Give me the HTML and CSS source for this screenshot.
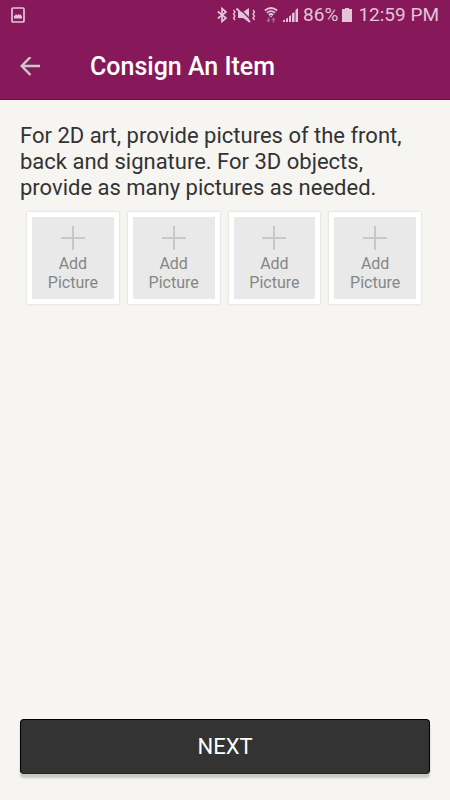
FILE: index.html
```html
<!DOCTYPE html>
<html lang="en">
<head>
  <meta charset="UTF-8" />
  <meta name="viewport" content="width=device-width, initial-scale=1.0" />
  <title>Consign An Item</title>
  <link rel="stylesheet" href="styles.css">
</head>
<body>
  <header class="header">
    <div class="status-bar">
      <svg class="picture-icon" width="14" height="16" viewBox="0 0 14 16">
        <rect x="1" y="1" width="12" height="14" rx="1" fill="none" stroke="currentColor" stroke-width="1.7" />
        <path d="M3 11.500V9l1-.5L5 7l1.500 1.500L7.500 7 9 8l1-.5.500 1.500.5.5v2z" fill="currentColor" />
      </svg>
      <div class="status-right">
        <svg width="10" height="16" viewBox="0 0 10 16" fill="none" stroke="currentColor" stroke-width="1.700">
          <path d="M.8 4.500l8.200 6.500L5 14.500v-13L9 5 .8 11.500" />
        </svg>
        <svg class="mute-icon" width="24" height="16" viewBox="0 0 24 16">
          <path d="M6 5h5l6-4v14l-6-4H6z" fill="currentColor" />
          <path d="M6.500 .5l12 12" stroke="#87195b" stroke-width="1.300" />
          <path d="M4.500 1.500L18 15" stroke="currentColor" stroke-width="2" />
          <path d="M1.500 3L3 5 1.500 7 3 9l-1.500 2L3 13M21 3l1.500 2L21 7l1.500 2-1.500 2 1.500 2" fill="none" stroke="currentColor" stroke-width="1.300" />
        </svg>
        <svg class="wifi-icon" width="14" height="16" viewBox="0 0 14 16">
          <g fill="none" stroke="currentColor" stroke-width="1.700">
            <path d="M.8 3.500Q7-1.500 13.200 3.500M2.800 5.800Q7 2.500 11.200 5.800M4.800 8Q7 6 9.200 8" />
          </g>
          <path d="M5.500 8.800h3L7 10.600z" fill="currentColor" />
          <path d="M4.500 10.500l2.200 2.500H5.300v2.500H3.700V13H2.300zM9.500 15.500L7.300 13h1.400v-2.500h1.600V13h1.400z" fill="currentColor" opacity=".45" transform="matrix(1 0 0 -1 0 26)" />
        </svg>
        <svg class="signal-icon" width="16" height="16" viewBox="0 0 16 16" fill="currentColor">
          <path d="M0 15v-1.500l2-1V15zM3 15v-3l2-1.500V15zM6 15V9.500L8 8v7zM9 15V6.500L11.500 5v10zM12.500 15V3L15 1v14z" />
        </svg>
        <span class="battery-level">86%</span>
        <svg class="battery-icon" width="10" height="16" viewBox="0 0 10 16" fill="currentColor">
          <path d="M3 1h4v1h3v13H0V2h3z" />
        </svg>
        <span>12:59 PM</span>
      </div>
    </div>
    <div class="title-bar">
      <button class="back" aria-label="Back">
        <svg width="20" height="20" viewBox="0 0 20 20" fill="none" stroke="currentColor" stroke-width="2.400">
          <path d="M20 9H2M10.500 0L1.700 9l8.800 9" />
        </svg>
      </button>
      <h1>Consign An Item</h1>
    </div>
  </header>

  <main class="content">
    <p class="intro">For 2D art, provide pictures of the front, back and signature. For 3D objects, provide as many pictures as needed.</p>
    <div class="pictures">
      <button class="add-picture">
        <svg width="24" height="24" viewBox="0 0 24 24"><path d="M12 0v24M0 12h24" stroke="#c8c8c8" stroke-width="2" /></svg>
        <span>Add<br>Picture</span>
      </button>
      <button class="add-picture">
        <svg width="24" height="24" viewBox="0 0 24 24"><path d="M12 0v24M0 12h24" stroke="#c8c8c8" stroke-width="2" /></svg>
        <span>Add<br>Picture</span>
      </button>
      <button class="add-picture">
        <svg width="24" height="24" viewBox="0 0 24 24"><path d="M12 0v24M0 12h24" stroke="#c8c8c8" stroke-width="2" /></svg>
        <span>Add<br>Picture</span>
      </button>
      <button class="add-picture">
        <svg width="24" height="24" viewBox="0 0 24 24"><path d="M12 0v24M0 12h24" stroke="#c8c8c8" stroke-width="2" /></svg>
        <span>Add<br>Picture</span>
      </button>
    </div>
  </main>

  <footer class="footer">
    <button class="next">NEXT</button>
  </footer>
</body>
</html>
```

FILE: styles.css
```css
* {
  box-sizing: border-box;
}

body {
  margin: 0;
  min-height: 100vh;
  display: flex;
  flex-direction: column;
  background-color: #f6f5f1;
  color: #333;
  font-family: Roboto, sans-serif;
}

button {
  font-family: inherit;
  cursor: pointer;
}

svg {
  display: block;
  flex-shrink: 0;
}

.header {
  background-color: #87195b;
  border-bottom: 1px solid #6d0c47;
}

.status-bar {
  display: flex;
  align-items: center;
  justify-content: space-between;
  height: 29px;
  padding: 0 11px;
  color: #e2c5d6;
  font-size: 19px;
}

.status-right {
  display: flex;
  align-items: center;
}

.mute-icon {
  margin-left: 5px;
}

.wifi-icon {
  margin-left: 8px;
}

.signal-icon {
  margin-left: 5px;
}

.battery-level {
  margin-left: 4px;
}

.battery-icon {
  margin: 0 6px 0 4px;
}

.title-bar {
  display: flex;
  align-items: center;
  height: 70px;
  padding: 5px 20px 0;
}

.back {
  padding: 0;
  border: none;
  background: none;
  color: #c9c9c9;
}

.title-bar h1 {
  margin: 0 0 0 50px;
  color: #fff;
  font-size: 25px;
  font-weight: 500;
}

.content {
  flex: 1;
  padding: 23px 20px;
}

.intro {
  margin: 0 0 11px;
  font-size: 22px;
  line-height: 26px;
}

.pictures {
  display: grid;
  grid-template-columns: repeat(4, 1fr);
  gap: 9px;
  padding: 0 9px 0 7px;
}

.add-picture {
  display: flex;
  flex-direction: column;
  align-items: center;
  gap: 4px;
  height: 92px;
  padding: 9px 0 0;
  border: 5px solid #fff;
  background-color: #e9e9e9;
  box-shadow: 0 0 2px #ccc;
  color: #868686;
  font-size: 16px;
  line-height: 19px;
}

.footer {
  padding: 0 20px 26px;
}

.next {
  display: block;
  width: 100%;
  height: 55px;
  border: 1px solid #000;
  border-bottom-color: #222;
  border-radius: 4px;
  background-color: #333;
  box-shadow: 0 4px 2px #c8c7c4;
  color: #fff;
  font-size: 22px;
}
```
